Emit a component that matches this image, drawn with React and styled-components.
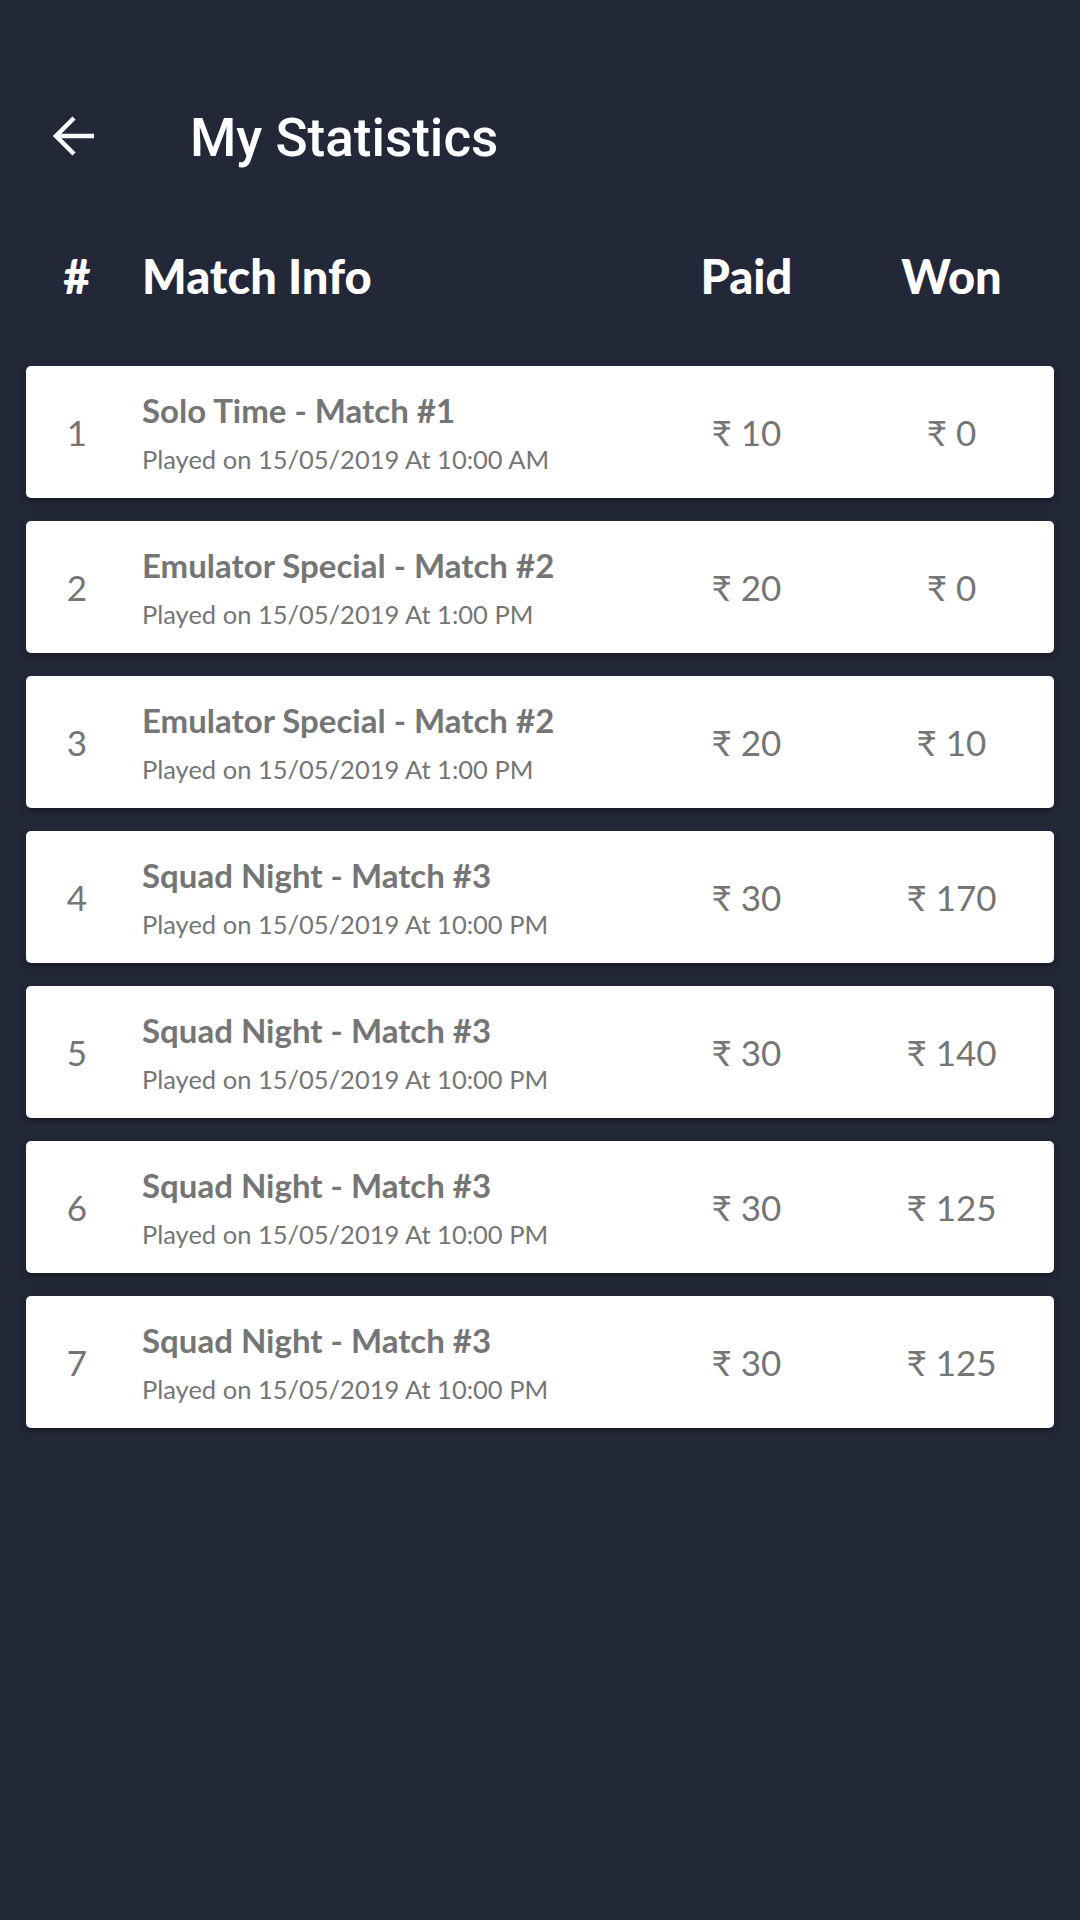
import styled, { createGlobalStyle } from "styled-components";

const GlobalStyle = createGlobalStyle`
  html, body {
    margin: 0;
    padding: 0;
    background: #232839;
  }
  * {
    box-sizing: border-box;
  }
`;

const matches = [
  { id: 1, title: "Solo Time - Match #1", played: "15/05/2019 At 10:00 AM", paid: 10, won: 0 },
  { id: 2, title: "Emulator Special - Match #2", played: "15/05/2019 At 1:00 PM", paid: 20, won: 0 },
  { id: 3, title: "Emulator Special - Match #2", played: "15/05/2019 At 1:00 PM", paid: 20, won: 10 },
  { id: 4, title: "Squad Night - Match #3", played: "15/05/2019 At 10:00 PM", paid: 30, won: 170 },
  { id: 5, title: "Squad Night - Match #3", played: "15/05/2019 At 10:00 PM", paid: 30, won: 140 },
  { id: 6, title: "Squad Night - Match #3", played: "15/05/2019 At 10:00 PM", paid: 30, won: 125 },
  { id: 7, title: "Squad Night - Match #3", played: "15/05/2019 At 10:00 PM", paid: 30, won: 125 },
];

const Page = styled.div`
  min-height: 1920px;
  width: 1080px;
  background: #232839;
  padding-top: 91px;
  font-family: Lato, "Noto Sans", sans-serif;
`;

const AppBar = styled.div`
  display: flex;
  align-items: center;
  height: 100px;
  padding-left: 51px;
`;

const BackButton = styled.button`
  display: flex;
  align-items: center;
  justify-content: center;
  padding: 0;
  margin-bottom: 10px;
  border: none;
  background: transparent;
  cursor: pointer;
`;

const Title = styled.h1`
  margin: 0 0 6px 95px;
  font-family: Roboto, "Liberation Sans", sans-serif;
  font-weight: 500;
  font-size: 53px;
  line-height: 1;
  color: #ffffff;
`;

const Grid = styled.div`
  display: grid;
  grid-template-columns: 102px 1fr 205px 205px;
  align-items: center;
`;

const HeaderRow = styled(Grid)`
  margin: 62px 26px 66px;
  color: #ffffff;
  font-weight: 900;
  font-size: 47px;
  line-height: 1;
`;

const HeadCell = styled.div`
  text-align: ${(props) => (props.left ? "left" : "center")};
  padding-left: ${(props) => (props.left ? "14px" : "0")};
`;

const List = styled.div`
  display: flex;
  flex-direction: column;
  gap: 23px;
  margin: 0 26px;
`;

const Card = styled(Grid)`
  height: 132px;
  background: #ffffff;
  border-radius: 5px;
  box-shadow: 0 3px 5px rgba(0, 0, 0, 0.35);
  color: #757575;
`;

const Cell = styled.div`
  text-align: center;
  font-size: 35px;
  line-height: 1;
`;

const Info = styled.div`
  display: flex;
  flex-direction: column;
  gap: 13px;
  padding: 2px 0 0 14px;
`;

const MatchName = styled.span`
  font-weight: 700;
  font-size: 33px;
  line-height: 1.2;
`;

const Played = styled.span`
  font-size: 25.5px;
  line-height: 1.2;
`;

const BackArrow = () => (
  <svg width="44" height="42" viewBox="0 0 44 42" fill="none">
    <path
      d="M43 21H5M23 3L5 21L23 39"
      stroke="#ffffff"
      strokeWidth="4.5"
      strokeLinejoin="miter"
    />
  </svg>
);

const App = () => {
  return (
    <Page>
      <GlobalStyle />
      <AppBar>
        <BackButton>
          <BackArrow />
        </BackButton>
        <Title>My Statistics</Title>
      </AppBar>
      <HeaderRow>
        <HeadCell>#</HeadCell>
        <HeadCell left>Match Info</HeadCell>
        <HeadCell>Paid</HeadCell>
        <HeadCell>Won</HeadCell>
      </HeaderRow>
      <List>
        {matches.map((m) => (
          <Card key={m.id}>
            <Cell>{m.id}</Cell>
            <Info>
              <MatchName>{m.title}</MatchName>
              <Played>Played on {m.played}</Played>
            </Info>
            <Cell>₹ {m.paid}</Cell>
            <Cell>₹ {m.won}</Cell>
          </Card>
        ))}
      </List>
    </Page>
  );
};

export default App;
